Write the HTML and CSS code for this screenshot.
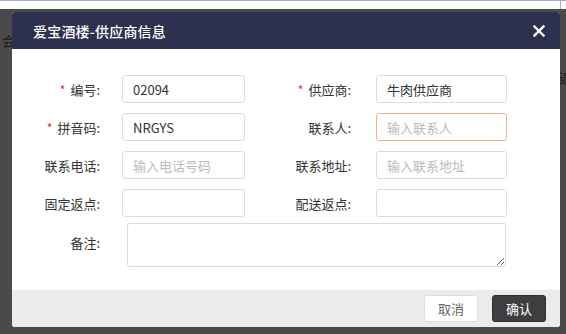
FILE: index.html
```html
<!DOCTYPE html>
<html lang="zh-CN">
  <head>
    <meta charset="UTF-8" />
    <meta name="viewport" content="width=device-width, initial-scale=1.0" />
    <title>爱宝酒楼-供应商信息</title>
    <link rel="stylesheet" href="styles.css">
  </head>
  <body>
    <div class="topstrip"><div class="topbox"></div></div>

    <!-- page content lying behind the overlay -->
    <span class="behind behind-left">会</span>
    <span class="behind behind-right">返</span>

    <aside class="overlay">
      <section class="dialog">
        <header class="dialog-head">
          <h1>爱宝酒楼-供应商信息</h1>
          <button class="close" aria-label="关闭">
            <svg width="12" height="12" viewBox="0 0 12 12">
              <path d="M1.5 1.5 L10.5 10.5 M10.5 1.5 L1.5 10.5" stroke="#fff" stroke-width="2.4" stroke-linecap="square" />
            </svg>
          </button>
        </header>

        <form class="dialog-body">
          <label class="lbl"><i>*</i>编号:</label>
          <input class="fld" type="text" value="02094" />
          <label class="lbl lbl-right"><i>*</i>供应商:</label>
          <input class="fld fld-right" type="text" value="牛肉供应商" />

          <label class="lbl"><i>*</i>拼音码:</label>
          <input class="fld" type="text" value="NRGYS" />
          <label class="lbl lbl-right">联系人:</label>
          <input class="fld fld-right focus" type="text" placeholder="输入联系人" />

          <label class="lbl">联系电话:</label>
          <input class="fld" type="text" placeholder="输入电话号码" />
          <label class="lbl lbl-right">联系地址:</label>
          <input class="fld fld-right" type="text" placeholder="输入联系地址" />

          <label class="lbl">固定返点:</label>
          <input class="fld" type="text" />
          <label class="lbl lbl-right">配送返点:</label>
          <input class="fld fld-right" type="text" />

          <label class="lbl lbl-note">备注:</label>
          <textarea class="note"></textarea>
        </form>

        <footer class="dialog-foot">
          <button type="button" class="btn btn-cancel">取消</button>
          <button type="button" class="btn btn-ok">确认</button>
        </footer>
      </section>
    </aside>
  </body>
</html>
```

FILE: styles.css
```css
* {
  margin: 0;
  padding: 0;
  box-sizing: border-box;
}

body {
  width: 566px;
  height: 334px;
  overflow: hidden;
  background-color: #4a4a4a;
  font-family: "Noto Sans CJK SC", "Noto Sans", sans-serif;
  font-size: 13px;
  color: #333;
  position: relative;
}

.topstrip {
  height: 9px;
  background-color: #fff;
  border-top: 1px solid #a3abd8;
}
.topbox {
  width: 561px;
  height: 8px;
  border-right: 1px solid #a3abd8;
}

.behind {
  position: absolute;
  color: #1e1e1e;
  font-size: 13px;
}
.behind-left {
  left: 2px;
  top: 31px;
}
.behind-right {
  left: 559px;
  top: 68px;
}

.overlay {
  position: absolute;
  top: 12px;
  left: 12px;
}

.dialog {
  width: 548px;
  background-color: #fff;
  border-radius: 3px;
  overflow: hidden;
}

.dialog-head {
  height: 37px;
  background-color: #2e3050;
  display: flex;
  align-items: center;
  justify-content: space-between;
  padding: 0 15px 0 21px;
}
.dialog-head h1 {
  font-size: 14px;
  font-weight: 500;
  color: #fff;
  letter-spacing: 0.2px;
}
.close {
  background: transparent;
  border: none;
  display: flex;
}

.dialog-body {
  display: grid;
  grid-template-columns: 98px 123px 131px 131px;
  grid-template-rows: repeat(4, 28px) 40px;
  row-gap: 10px;
  padding: 26px 0 23px 12px;
}

.lbl {
  align-self: center;
  text-align: right;
  padding-right: 22px;
  white-space: nowrap;
}
.lbl i {
  font-style: normal;
  font-size: 12px;
  color: #e02b2b;
  margin-right: 5px;
}
.lbl-right {
  padding-right: 25px;
}
.lbl-note {
  align-self: start;
  margin-top: 6px;
}

.fld {
  height: 28px;
  border: 1px solid #dcdcdc;
  border-radius: 3px;
  padding: 0 10px;
  font-family: inherit;
  font-size: 13px;
  color: #333;
  outline: none;
}
.fld::placeholder,
.note::placeholder {
  color: #bbb;
}
.focus {
  border-color: #f7ad85;
}

.note {
  grid-column: 2 / 5;
  height: 44px;
  margin: -4px 1px 0 5px;
  border: 1px solid #dcdcdc;
  border-radius: 3px;
  font-family: inherit;
  font-size: 13px;
  outline: none;
}

.dialog-foot {
  height: 37px;
  background-color: #ebebeb;
  display: flex;
  justify-content: flex-end;
  align-items: center;
  gap: 14px;
  padding-right: 14px;
}

.btn {
  width: 54px;
  height: 27px;
  border-radius: 3px;
  font-family: inherit;
  font-size: 13px;
}
.btn-cancel {
  background-color: #fff;
  border: 1px solid #dedede;
  color: #666;
}
.btn-ok {
  background-color: #3e3e3e;
  border: 1px solid #2f2f2f;
  color: #fff;
}
```
